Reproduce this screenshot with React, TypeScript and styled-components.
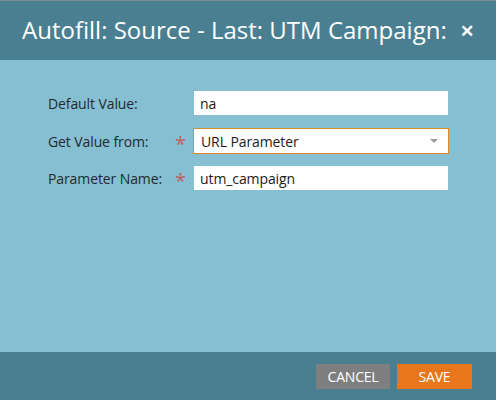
import React from "react";
import styled, { createGlobalStyle } from "styled-components";

const GlobalStyle = createGlobalStyle`
  html, body {
    margin: 0;
    padding: 0;
    background: #86bfd1;
  }
  * { box-sizing: border-box; }
`;

const Dialog = styled.div`
  width: 496px;
  height: 400px;
  display: flex;
  flex-direction: column;
  font-family: "Open Sans", "Liberation Sans", sans-serif;
  border-top: 1px solid #7d8c92;
`;

const Header = styled.div`
  height: 59px;
  background: #4a7f91;
  display: flex;
  align-items: center;
  gap: 13px;
  padding: 0 0 2px 22px;
  color: #fff;
`;

const Title = styled.div`
  font-size: 24px;
  letter-spacing: 0;
  white-space: nowrap;
`;

const Close = styled.span`
  font-size: 17px;
  font-weight: 700;
  line-height: 1;
  padding-top: 2px;
`;

const Body = styled.div`
  flex: 1;
  background: #86bfd1;
  padding: 31px 48px 0 48px;
  display: flex;
  flex-direction: column;
  gap: 13px;
`;

const Row = styled.div`
  display: grid;
  grid-template-columns: 127px 19px 254px;
  align-items: center;
  height: 24px;
`;

const Label = styled.label`
  font-size: 14px;
  letter-spacing: -0.1px;
  color: #1e2a2e;
`;

const Star = styled.span`
  color: #c0605d;
  font-size: 20px;
  line-height: 1;
  padding-top: 6px;
`;

const Field = styled.div<{ focused?: boolean }>`
  height: ${(p) => (p.focused ? "26px" : "24px")};
  margin: ${(p) => (p.focused ? "0 -1px" : "0")};
  background: #fff;
  border: ${(p) => (p.focused ? "1px solid #d9892c" : "none")};
  display: flex;
  align-items: center;
  justify-content: space-between;
  padding: 0 10px 0 ${(p) => (p.focused ? "7px" : "6px")};
  font-size: 14px;
  letter-spacing: -0.1px;
  color: #1b1b1b;
`;

const Caret = styled.span`
  width: 0;
  height: 0;
  border-left: 4px solid transparent;
  border-right: 4px solid transparent;
  border-top: 4px solid #9a9a9a;
`;

const Footer = styled.div`
  height: 48px;
  background: #4a7f91;
  display: flex;
  justify-content: flex-end;
  align-items: center;
  gap: 7px;
  padding: 0 24px 0 0;
`;

const Button = styled.button<{ primary?: boolean }>`
  height: 25px;
  width: ${(p) => (p.primary ? "75px" : "74px")};
  border: none;
  background: ${(p) => (p.primary ? "#e8761c" : "#7f7f7f")};
  color: #fff;
  font-family: "Open Sans", "Liberation Sans", sans-serif;
  font-size: 14px;
  letter-spacing: -0.2px;
  padding: 0;
`;

export default function App() {
  return (
    <>
      <GlobalStyle />
      <Dialog>
        <Header>
          <Title>Autofill: Source - Last: UTM Campaign:</Title>
          <Close>✕</Close>
        </Header>
        <Body>
          <Row>
            <Label>Default Value:</Label>
            <span />
            <Field>na</Field>
          </Row>
          <Row>
            <Label>Get Value from:</Label>
            <Star>*</Star>
            <Field focused>
              URL Parameter
              <Caret />
            </Field>
          </Row>
          <Row>
            <Label>Parameter Name:</Label>
            <Star>*</Star>
            <Field>utm_campaign</Field>
          </Row>
        </Body>
        <Footer>
          <Button>CANCEL</Button>
          <Button primary>SAVE</Button>
        </Footer>
      </Dialog>
    </>
  );
}
